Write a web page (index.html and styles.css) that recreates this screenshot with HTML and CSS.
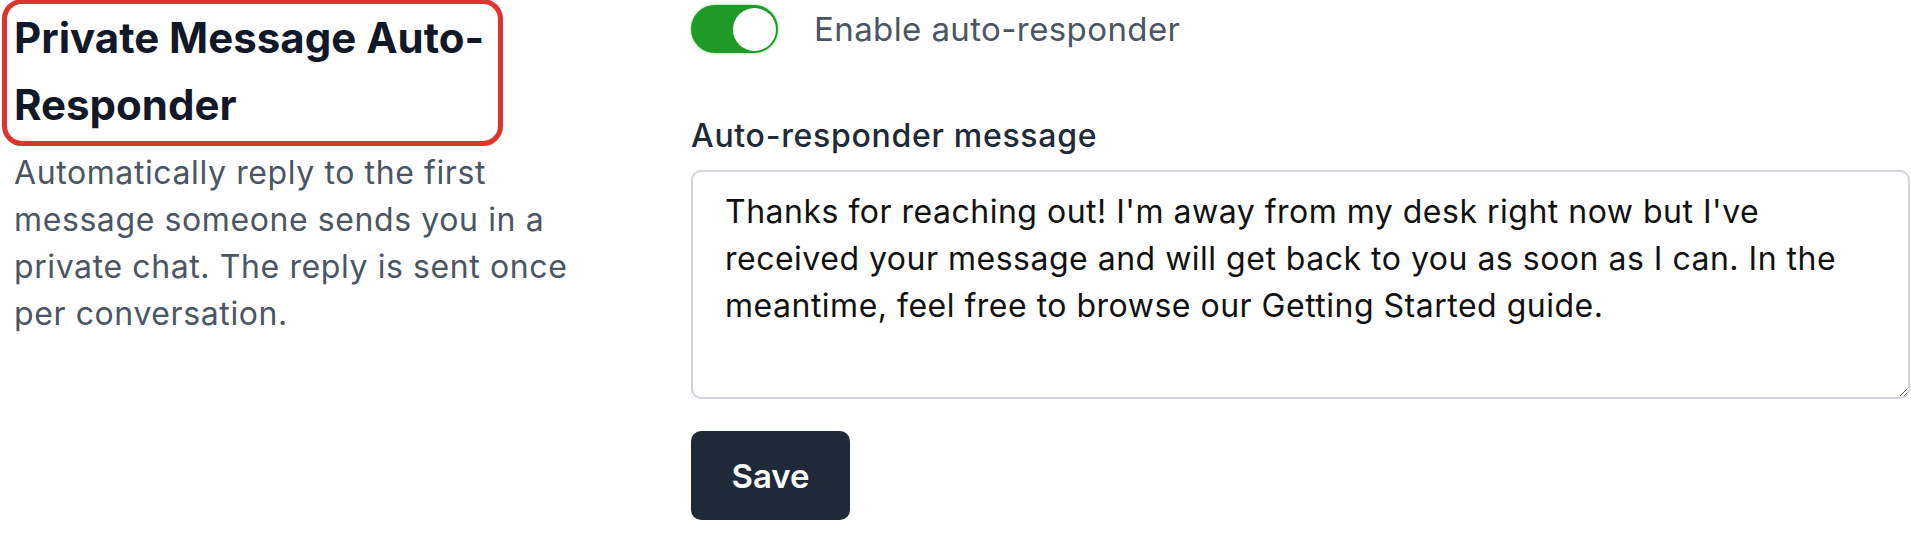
FILE: index.html
```html
<!DOCTYPE html>
<html lang="en">
<head>
    <meta charset="UTF-8">
    <meta name="viewport" content="width=device-width, initial-scale=1.0">
    <title>Auto-responder settings</title>
    <link rel="stylesheet" href="styles.css">
</head>
<body>
    <div class="ajustes">
        <section class="info">
            <h2 class="titulo">Private Message Auto-Responder</h2>
            <p class="descripcion">Automatically reply to the first message someone sends you in a private chat. The reply is sent once per conversation.</p>
        </section>
        <section class="formulario">
            <label class="fila-toggle">
                <span class="toggle"><span class="bola"></span></span>
                <span class="toggle-texto">Enable auto-responder</span>
            </label>
            <label class="etiqueta" for="mensaje">Auto-responder message</label>
            <textarea id="mensaje" class="mensaje">Thanks for reaching out! I'm away from my desk right now but I've received your message and will get back to you as soon as I can. In the meantime, feel free to browse our Getting Started guide.</textarea>
            <button class="guardar">Save</button>
        </section>
    </div>
</body>
</html>
```

FILE: styles.css
```css
*{
    box-sizing: border-box;
}
body{
    margin: 0;
    background-color: #ffffff;
    font-family: Inter, "Noto Sans", sans-serif;
}
.ajustes{
    display: grid;
    grid-template-columns: 620px 1fr;
    column-gap: 69px;
    padding: 0 1px 0 2px;
}
.titulo{
    width: 501px;
    margin: -1px 0 0 0;
    padding: 0 6px 3px 7px;
    border: 5px solid #e0332b;
    border-radius: 20px;
    font-size: 42px;
    line-height: 67px;
    font-weight: 700;
    color: #111827;
}
.descripcion{
    margin: 3px 0 0 0;
    padding-left: 12px;
    font-size: 32px;
    line-height: 47px;
    letter-spacing: 0.6px;
    color: #4b5563;
}
.formulario{
    display: flex;
    flex-direction: column;
    align-items: flex-start;
}
.fila-toggle{
    display: flex;
    align-items: center;
    gap: 36px;
    margin-top: 5px;
}
.toggle{
    width: 87px;
    height: 48px;
    border-radius: 24px;
    background-color: #1e9b26;
    box-shadow: 0 0 3px rgba(40, 180, 40, 0.6);
    display: flex;
    align-items: center;
    justify-content: flex-end;
    padding-right: 2px;
}
.bola{
    width: 43px;
    height: 43px;
    border-radius: 50%;
    background-color: #ffffff;
}
.toggle-texto{
    font-size: 33px;
    letter-spacing: 0.4px;
    color: #4b5563;
}
.etiqueta{
    margin-top: 59px;
    font-size: 32px;
    line-height: 47px;
    letter-spacing: 0.7px;
    font-weight: 500;
    color: #1f2937;
}
.mensaje{
    width: 100%;
    height: 229px;
    margin-top: 11px;
    padding: 16px 32px;
    border: 2px solid #d1d5db;
    border-radius: 10px;
    font-family: Inter, "Noto Sans", sans-serif;
    font-size: 32px;
    line-height: 47px;
    letter-spacing: 0.5px;
    color: #111111;
    resize: vertical;
    outline: none;
}
.guardar{
    margin-top: 32px;
    width: 159px;
    height: 89px;
    border: none;
    border-radius: 10px;
    background-color: #1f2937;
    color: #ffffff;
    font-family: Inter, "Noto Sans", sans-serif;
    font-size: 33px;
    font-weight: 600;
}
```
